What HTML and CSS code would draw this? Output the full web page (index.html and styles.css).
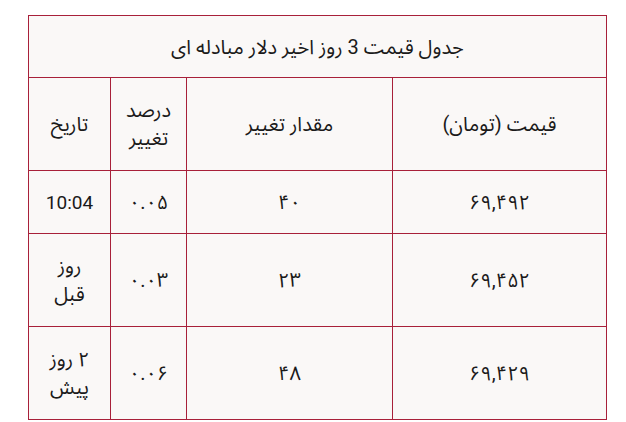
FILE: index.html
```html
<!DOCTYPE html>
<html lang="fa" dir="rtl">
<head>
<meta charset="utf-8">
<link rel="stylesheet" href="styles.css">
</head>
<body>
<table class="rates">
  <colgroup>
    <col class="c-price">
    <col class="c-amount">
    <col class="c-pct">
    <col class="c-date">
  </colgroup>
  <thead>
    <tr><th colspan="4" class="title">جدول قیمت 3 روز اخیر دلار مبادله ای</th></tr>
    <tr class="head">
      <th>قیمت (تومان)</th>
      <th>مقدار تغییر</th>
      <th>درصد تغییر</th>
      <th>تاریخ</th>
    </tr>
  </thead>
  <tbody>
    <tr class="short">
      <td>۶۹,۴۹۲</td>
      <td>۴۰</td>
      <td>۰.۰۵</td>
      <td><span class="latin">10:04</span></td>
    </tr>
    <tr>
      <td>۶۹,۴۵۲</td>
      <td>۲۳</td>
      <td>۰.۰۳</td>
      <td>روز قبل</td>
    </tr>
    <tr>
      <td>۶۹,۴۲۹</td>
      <td>۴۸</td>
      <td>۰.۰۶</td>
      <td>۲ روز پیش</td>
    </tr>
  </tbody>
</table>
</body>
</html>
```
FILE: styles.css
```css
html, body {
  margin: 0;
  background: #ffffff;
}
body {
  padding: 15px 19px 0 30px;
  font-family: Roboto, "Noto Sans Arabic", "DejaVu Sans", sans-serif;
  font-size: 20px;
  color: #1a1a1a;
}
.rates {
  width: 578px;
  border-collapse: collapse;
  background: #faf8f7;
  table-layout: fixed;
}
.c-price { width: 214px; }
.c-amount { width: 206px; }
.c-pct { width: 76px; }
.c-date { width: 82px; }
.rates th, .rates td {
  border: 1px solid #a8203a;
  text-align: center;
  font-weight: normal;
  line-height: 28px;
  padding: 0 12px;
}
.latin { font-size: 19px; }
.rates .title { height: 61px; }
.rates .head th { height: 92px; }
.rates td { height: 92px; }
.rates .short td { height: 62px; }
```
